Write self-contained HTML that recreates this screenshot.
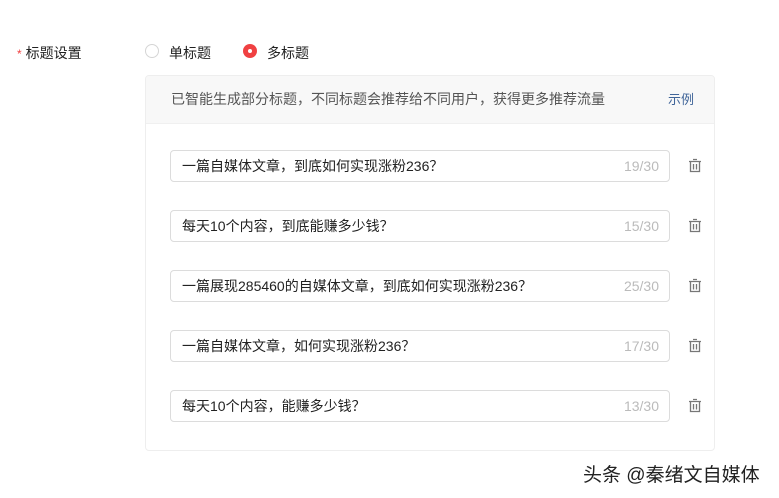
<!DOCTYPE html>
<html><head><meta charset="utf-8"><style>
body{margin:0;width:779px;height:498px;background:#fff;font-family:"Liberation Sans","Noto Sans CJK SC",sans-serif;position:relative;overflow:hidden;color:#222}
.a{position:absolute}
.lbl{left:17px;top:43px;font-size:14px;color:#222}
.lbl b{color:#f04142;font-weight:normal;margin-right:4px;font-size:12px}
.radio{top:44px;width:14px;height:14px;border-radius:50%;box-sizing:border-box}
.box{left:145px;top:75px;width:570px;height:376px;border:1px solid #eeeeee;border-radius:4px;box-sizing:border-box;overflow:hidden}
.hd{height:47px;background:#f8f8f8;border-bottom:1px solid #f0f0f0;font-size:14px;color:#555;line-height:47px;padding-left:25px;position:relative}
.hd span{position:absolute;right:20px;top:0;color:#406599;font-size:13px}
.in{left:170px;width:500px;height:32px;border:1px solid #dcdcdc;border-radius:4px;box-sizing:border-box;font-size:14px;line-height:30px;padding-left:11px;color:#222}
.in span{position:absolute;right:10px;top:0;color:#bbb}
.tr{left:688px}
</style></head><body>
<div class="a lbl"><b>*</b>标题设置</div>
<div class="a radio" style="left:145px;border:1px solid #d5d5d5"></div>
<div class="a" style="left:169px;top:43px;font-size:14px">单标题</div>
<div class="a radio" style="left:243px;background:#f04142"><div style="position:absolute;left:5px;top:5px;width:4px;height:4px;background:#fff;border-radius:50%"></div></div>
<div class="a" style="left:267px;top:43px;font-size:14px">多标题</div>
<div class="a box"><div class="hd">已智能生成部分标题，不同标题会推荐给不同用户，获得更多推荐流量<span>示例</span></div></div>
<div class="a in" style="top:150px">一篇自媒体文章，到底如何实现涨粉236？<span>19/30</span></div>
<div class="a in" style="top:210px">每天10个内容，到底能赚多少钱？<span>15/30</span></div>
<div class="a in" style="top:270px">一篇展现285460的自媒体文章，到底如何实现涨粉236？<span>25/30</span></div>
<div class="a in" style="top:330px">一篇自媒体文章，如何实现涨粉236？<span>17/30</span></div>
<div class="a in" style="top:390px">每天10个内容，能赚多少钱？<span>13/30</span></div>
<svg class="a tr" style="top:158px" width="14" height="15" viewBox="0 0 14 15"><g fill="none" stroke="#777" stroke-width="1.3"><path d="M5 1.5h4M1 3.5h12M2.5 3.5v10h9v-10M5.5 6v5.5M8.5 6v5.5"/></g></svg>
<svg class="a tr" style="top:218px" width="14" height="15" viewBox="0 0 14 15"><g fill="none" stroke="#777" stroke-width="1.3"><path d="M5 1.5h4M1 3.5h12M2.5 3.5v10h9v-10M5.5 6v5.5M8.5 6v5.5"/></g></svg>
<svg class="a tr" style="top:278px" width="14" height="15" viewBox="0 0 14 15"><g fill="none" stroke="#777" stroke-width="1.3"><path d="M5 1.5h4M1 3.5h12M2.5 3.5v10h9v-10M5.5 6v5.5M8.5 6v5.5"/></g></svg>
<svg class="a tr" style="top:338px" width="14" height="15" viewBox="0 0 14 15"><g fill="none" stroke="#777" stroke-width="1.3"><path d="M5 1.5h4M1 3.5h12M2.5 3.5v10h9v-10M5.5 6v5.5M8.5 6v5.5"/></g></svg>
<svg class="a tr" style="top:398px" width="14" height="15" viewBox="0 0 14 15"><g fill="none" stroke="#777" stroke-width="1.3"><path d="M5 1.5h4M1 3.5h12M2.5 3.5v10h9v-10M5.5 6v5.5M8.5 6v5.5"/></g></svg>
<div class="a" style="left:583px;top:460px;font-size:19px;color:#222;text-shadow:0 0 2px #fff">头条 @秦绪文自媒体</div>
</body></html>
